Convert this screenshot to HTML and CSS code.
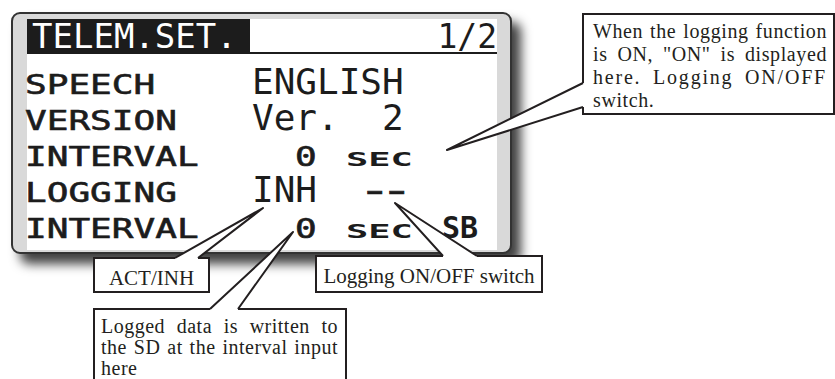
FILE: index.html
```html
<!DOCTYPE html>
<html lang="en">
<head>
    <meta charset="UTF-8">
    <meta name="viewport" content="width=device-width, initial-scale=1.0">
    <title>TELEM.SET. - Logging</title>
    <link rel="stylesheet" href="styles.css">
</head>
<body>
    <div class="stage">
        <div class="lcd">
            <div class="screen">
                <div class="head">
                    <div class="title">TELEM.SET.</div>
                    <div class="page">1/2</div>
                </div>
                <div class="rows">
                    <div class="row">
                        <span class="lbl"><span class="px">SPEECH</span></span>
                        <span class="val">ENGLISH</span>
                    </div>
                    <div class="row">
                        <span class="lbl"><span class="px">VERSION</span></span>
                        <span class="val">Ver.  2</span>
                    </div>
                    <div class="row">
                        <span class="lbl"><span class="px">INTERVAL</span></span>
                        <span class="num"><span class="px">0</span></span>
                        <span class="unit"><span class="px sm">SEC</span></span>
                    </div>
                    <div class="row">
                        <span class="lbl"><span class="px">LOGGING</span></span>
                        <span class="val mode">INH</span>
                        <span class="dash">--</span>
                    </div>
                    <div class="row">
                        <span class="lbl"><span class="px">INTERVAL</span></span>
                        <span class="num"><span class="px">0</span></span>
                        <span class="unit"><span class="px sm">SEC</span></span>
                        <span class="sw">SB</span>
                    </div>
                </div>
            </div>
        </div>

        <div class="note note-log">
            <span class="ln">When the logging function</span>
            <span class="ln">is ON, "ON" is displayed</span>
            <span class="ln wide">here. Logging ON/OFF</span>
            <span class="ln end">switch.</span>
        </div>
        <div class="note note-act">ACT/INH</div>
        <div class="note note-sw">Logging ON/OFF switch</div>
        <div class="note note-data">
            <span class="ln">Logged data is written to</span>
            <span class="ln">the SD at the interval input</span>
            <span class="ln end">here</span>
        </div>

        <!-- leader wedges joining each note to its spot on the screen -->
        <svg class="leaders" width="835" height="379" viewBox="0 0 835 379">
            <g fill="#fff">
                <polygon points="586,83 583,83 447,150 583,107 586,107"/>
                <polygon points="175,261 175,258 263,208 198,258 198,261"/>
                <polygon points="443,259 443,256 395,203 477,256 477,259"/>
                <polygon points="210,312 210,309 293,232 238,309 238,312"/>
            </g>
            <g fill="none" stroke="#231f20" stroke-width="2" stroke-linejoin="round">
                <polyline points="583,83 447,150 583,107"/>
                <polyline points="175,258 263,208 198,258"/>
                <polyline points="443,256 395,203 477,256"/>
                <polyline points="210,309 293,232 238,309"/>
            </g>
        </svg>
    </div>
</body>
</html>
```

FILE: styles.css
```css
body {
    margin: 0;
    background-color: white;
}
.stage {
    position: relative;
    width: 835px;
    height: 379px;
    padding: 12px 0 0 11px;
    box-sizing: border-box;
    overflow: hidden;
    color: #231f20;
}

/* LCD frame */
.lcd {
    width: 501px;
    height: 242px;
    box-sizing: border-box;
    padding: 4px 13px 3px 14px;
    border: 2px solid #333;
    border-radius: 9px;
    background-color: #d9d9d9;
    box-shadow: 9px 10px 11px rgba(0, 0, 0, 0.75);
}
.screen {
    height: 100%;
    background-color: white;
    color: #1c1c1c;
}
.head {
    display: flex;
    margin-top: 1px;
    height: 35px;
}
.title {
    width: 223px;
    padding-left: 5px;
    box-sizing: border-box;
    background-color: #1c1c1c;
    color: white;
    font: 34px/35px 'DejaVu Sans Mono', monospace;
}
.page {
    flex: 1;
    box-sizing: border-box;
    border-bottom: 2px solid #1c1c1c;
    text-align: right;
    font: 33px/35px 'DejaVu Sans Mono', monospace;
}
.rows {
    margin-top: 10px;
}
.row {
    display: flex;
    align-items: baseline;
    height: 36px;
    font: 36px/36px 'DejaVu Sans Mono', monospace;
}
.lbl {
    flex: none;
    width: 225px;
    margin-left: -2px;
    margin-right: 2px;
}
.px {
    display: inline-block;
    font: 27px/28px 'DejaVu Sans Mono', monospace;
    -webkit-text-stroke: 0.6px #1c1c1c;
    transform: scaleX(1.335);
    transform-origin: 0 0;
}
.px.sm {
    font-weight: bold;
    font-size: 20px;
    line-height: 20px;
    -webkit-text-stroke: 0;
    transform: scaleX(1.85);
}
.val {
    white-space: pre;
}
.mode {
    width: 106px;
}
.num {
    flex: none;
    width: 94px;
    padding-left: 43px;
    box-sizing: border-box;
}
.unit {
    flex: none;
    width: 96px;
}
.dash {
    letter-spacing: -7.4px;
    -webkit-text-stroke: 0.6px #1c1c1c;
    transform: scaleX(1.54);
    transform-origin: 0 0;
}
.sw {
    font: bold 30px/30px 'DejaVu Sans Mono', monospace;
}

/* callouts */
.note {
    position: absolute;
    box-sizing: border-box;
    border: 2px solid #231f20;
    background-color: white;
    font-family: 'Liberation Serif', 'Times New Roman', serif;
    font-size: 20px;
}
.ln {
    display: block;
    white-space: nowrap;
    text-align: justify;
    text-align-last: justify;
}
.ln.wide {
    letter-spacing: 1.8px;
}
.ln.end {
    text-align-last: auto;
}
.note-log {
    left: 582px;
    top: 13px;
    width: 253px;
    height: 102px;
    padding: 5px 6px 0 9px;
    line-height: 23px;
    letter-spacing: 0.6px;
}
.note-act {
    left: 93px;
    top: 257px;
    width: 117px;
    height: 36px;
    padding-top: 7px;
    font-size: 21px;
    line-height: 25px;
    text-align: center;
}
.note-sw {
    left: 315px;
    top: 255px;
    width: 228px;
    height: 38px;
    padding-top: 6px;
    font-size: 21px;
    line-height: 27px;
    text-align: center;
}
.note-data {
    left: 93px;
    top: 308px;
    width: 254px;
    height: 90px;
    padding: 6px 7px 0 6px;
    line-height: 21px;
    letter-spacing: 0.5px;
}
.leaders {
    position: absolute;
    left: 0;
    top: 0;
}
```
